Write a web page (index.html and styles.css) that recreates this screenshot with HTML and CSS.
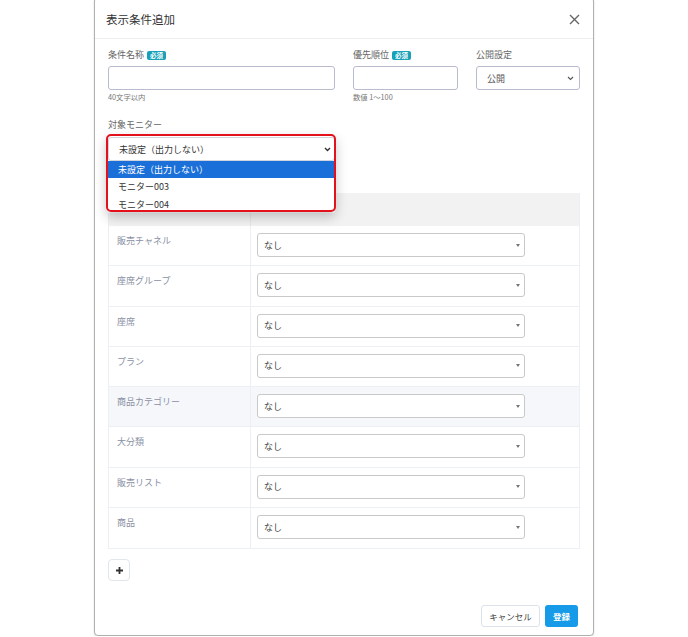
FILE: index.html
```html
<!DOCTYPE html>
<html lang="ja">
<head>
<meta charset="utf-8">
<title>表示条件追加</title>
<link rel="stylesheet" href="styles.css">
</head>
<body>
<div class="modal">
  <div class="modal-header">
    <div class="modal-title">表示条件追加</div>
    <svg class="close" width="11" height="11" viewBox="0 0 11 11"><path d="M1 1L10 10M10 1L1 10" stroke="#666" stroke-width="1.4" fill="none"/></svg>
  </div>
  <div class="modal-body">
    <div class="top-row">
      <div class="field">
        <div class="label">条件名称<span class="badge">必須</span></div>
        <div class="input"></div>
        <div class="hint">40文字以内</div>
      </div>
      <div class="field">
        <div class="label">優先順位<span class="badge">必須</span></div>
        <div class="input"></div>
        <div class="hint">数値 1〜100</div>
      </div>
      <div class="field">
        <div class="label">公開設定</div>
        <div class="input select-public">
          <span>公開</span>
          <svg width="7" height="5" viewBox="0 0 7 5"><path d="M1 1L3.5 3.5L6 1" stroke="#555" stroke-width="1.1" fill="none"/></svg>
        </div>
      </div>
    </div>

    <div class="monitor">
      <div class="label">対象モニター</div>
      <div class="monitor-wrap">
        <div class="monitor-select">
          <span>未設定（出力しない）</span>
          <svg width="7" height="5" viewBox="0 0 7 5"><path d="M1 1L3.5 3.5L6 1" stroke="#333" stroke-width="1.4" fill="none"/></svg>
        </div>
        <div class="highlight"></div>
        <ul class="options">
          <li class="selected">未設定（出力しない）</li>
          <li>モニター003</li>
          <li>モニター004</li>
        </ul>
      </div>
    </div>

    <div class="table">
      <div class="row head"><div class="cell-l"></div><div class="cell-r"></div></div>
      <div class="row"><div class="cell-l">販売チャネル</div><div class="cell-r"><div class="sel"><span>なし</span><i class="caret"></i></div></div></div>
      <div class="row"><div class="cell-l">座席グループ</div><div class="cell-r"><div class="sel"><span>なし</span><i class="caret"></i></div></div></div>
      <div class="row"><div class="cell-l">座席</div><div class="cell-r"><div class="sel"><span>なし</span><i class="caret"></i></div></div></div>
      <div class="row"><div class="cell-l">プラン</div><div class="cell-r"><div class="sel"><span>なし</span><i class="caret"></i></div></div></div>
      <div class="row hover"><div class="cell-l">商品カテゴリー</div><div class="cell-r"><div class="sel"><span>なし</span><i class="caret"></i></div></div></div>
      <div class="row"><div class="cell-l">大分類</div><div class="cell-r"><div class="sel"><span>なし</span><i class="caret"></i></div></div></div>
      <div class="row"><div class="cell-l">販売リスト</div><div class="cell-r"><div class="sel"><span>なし</span><i class="caret"></i></div></div></div>
      <div class="row"><div class="cell-l">商品</div><div class="cell-r"><div class="sel"><span>なし</span><i class="caret"></i></div></div></div>
    </div>

    <div class="add-btn">
      <svg width="9" height="9" viewBox="0 0 9 9"><path d="M4.5 1V8M1 4.5H8" stroke="#333" stroke-width="1.8" fill="none"/></svg>
    </div>
  </div>
  <div class="modal-footer">
    <div class="btn cancel">キャンセル</div>
    <div class="btn primary">登録</div>
  </div>
</div>
</body>
</html>
```

FILE: styles.css
```css
* { box-sizing: border-box; }
html, body { margin: 0; padding: 0; background: #fff; }
body {
  font-family: "Noto Sans CJK JP", "Noto Sans", "Liberation Sans", sans-serif;
  color: #333;
  overflow: hidden;
}
.modal {
  width: 500px;
  margin: -3px auto 0;
  border: 1px solid #b0b0b0;
  border-radius: 4px;
  background: #fff;
  box-shadow: 0 1px 2px rgba(0,0,0,0.15);
  height: 639px;
  display: flex;
  flex-direction: column;
}
.modal-header {
  height: 41px;
  padding: 2px 12px 0 11px;
  border-bottom: 1px solid #eeeeee;
  display: flex;
  align-items: center;
  justify-content: space-between;
}
.modal-title { font-size: 11.5px; color: #333; }
.close { margin-right: 1px; }

.modal-body { padding: 9px 13px 0 13px; }
.top-row {
  display: grid;
  grid-template-columns: 227px 105px 104px;
  column-gap: 18px;
}
.label {
  font-size: 9px;
  line-height: 14px;
  height: 14px;
  color: #666;
  display: flex;
  align-items: center;
}
.badge {
  display: inline-block;
  margin-left: 3px;
  background: #17a0b8;
  color: #fff;
  font-size: 6.5px;
  font-weight: bold;
  line-height: 9px;
  height: 9px;
  padding: 0 3px;
  border-radius: 2px;
}
.input {
  margin-top: 4px;
  height: 24px;
  border: 1px solid #b9bccf;
  border-radius: 3px;
  background: #fff;
}
.hint {
  margin-top: 2px;
  font-size: 7.3px;
  line-height: 10px;
  color: #777;
}
.select-public {
  display: flex;
  align-items: center;
  justify-content: space-between;
  padding: 0 5px 0 10px;
  font-size: 9px;
  color: #555;
}

.monitor { margin-top: 16px; }
.monitor .label { margin-bottom: 5px; }
.monitor-wrap { position: relative; width: 227px; }
.monitor-select {
  height: 24px;
  border: 1px solid #d0d4de;
  border-radius: 3px;
  display: flex;
  align-items: center;
  justify-content: space-between;
  padding: 0 3px 0 10px;
  font-size: 9px;
  color: #333;
  background: #fff;
}
.highlight {
  position: absolute;
  left: -2px;
  top: -3px;
  width: 230px;
  height: 78px;
  border: 2px solid #e3111b;
  border-radius: 5px;
  z-index: 3;
  box-shadow: 0 5px 12px rgba(0,0,0,0.22);
  pointer-events: none;
}
.options {
  position: absolute;
  left: 0;
  top: 24px;
  width: 227px;
  margin: 0;
  padding: 0;
  list-style: none;
  background: #fff;
  z-index: 2;
  font-size: 9px;
  color: #333;
}
.options li {
  height: 17.3px;
  line-height: 17.3px;
  padding-left: 10px;
}
.options li.selected {
  background: #1b6fd8;
  color: #fff;
}

.table {
  margin-top: 32px;
  border: 1px solid #eceff3;
  border-top: none;
}
.row {
  display: grid;
  grid-template-columns: 142px 1fr;
  height: 40.3px;
  border-bottom: 1px solid #eceff3;
}
.row:last-child { border-bottom: none; }
.row.head { height: 33px; background: #f2f2f3; border-bottom: none; }
.row.hover { background: #f5f7fa; }
.cell-l {
  border-right: 1px solid #eceff3;
  padding: 9px 0 0 8px;
  font-size: 9px;
  line-height: 12px;
  color: #8a90a3;
}
.row.head .cell-l { border-right-color: #e6e6e8; }
.cell-r { padding: 7px 0 0 6px; }
.sel {
  width: 268px;
  height: 24px;
  border: 1px solid #c9c9c9;
  border-radius: 3px;
  background: #fff;
  display: flex;
  align-items: center;
  justify-content: space-between;
  padding: 0 4px 0 6px;
  font-size: 9px;
  color: #444;
}
.caret {
  width: 0;
  height: 0;
  border-left: 2.5px solid transparent;
  border-right: 2.5px solid transparent;
  border-top: 3px solid #777;
}

.add-btn {
  margin-top: 10px;
  width: 22px;
  height: 22px;
  border: 1px solid #e1e5ec;
  border-radius: 4px;
  display: flex;
  align-items: center;
  justify-content: center;
}

.modal-footer {
  margin-top: auto;
  padding: 0 15px 8px 0;
  display: flex;
  justify-content: flex-end;
  gap: 5px;
}
.btn {
  height: 22px;
  border-radius: 3px;
  display: flex;
  align-items: center;
  justify-content: center;
  font-size: 8.5px;
}
.cancel {
  width: 59px;
  border: 1px solid #dde2ea;
  color: #444;
  background: #fff;
}
.primary {
  width: 33px;
  background: #179be8;
  color: #fff;
  font-weight: bold;
}
```
